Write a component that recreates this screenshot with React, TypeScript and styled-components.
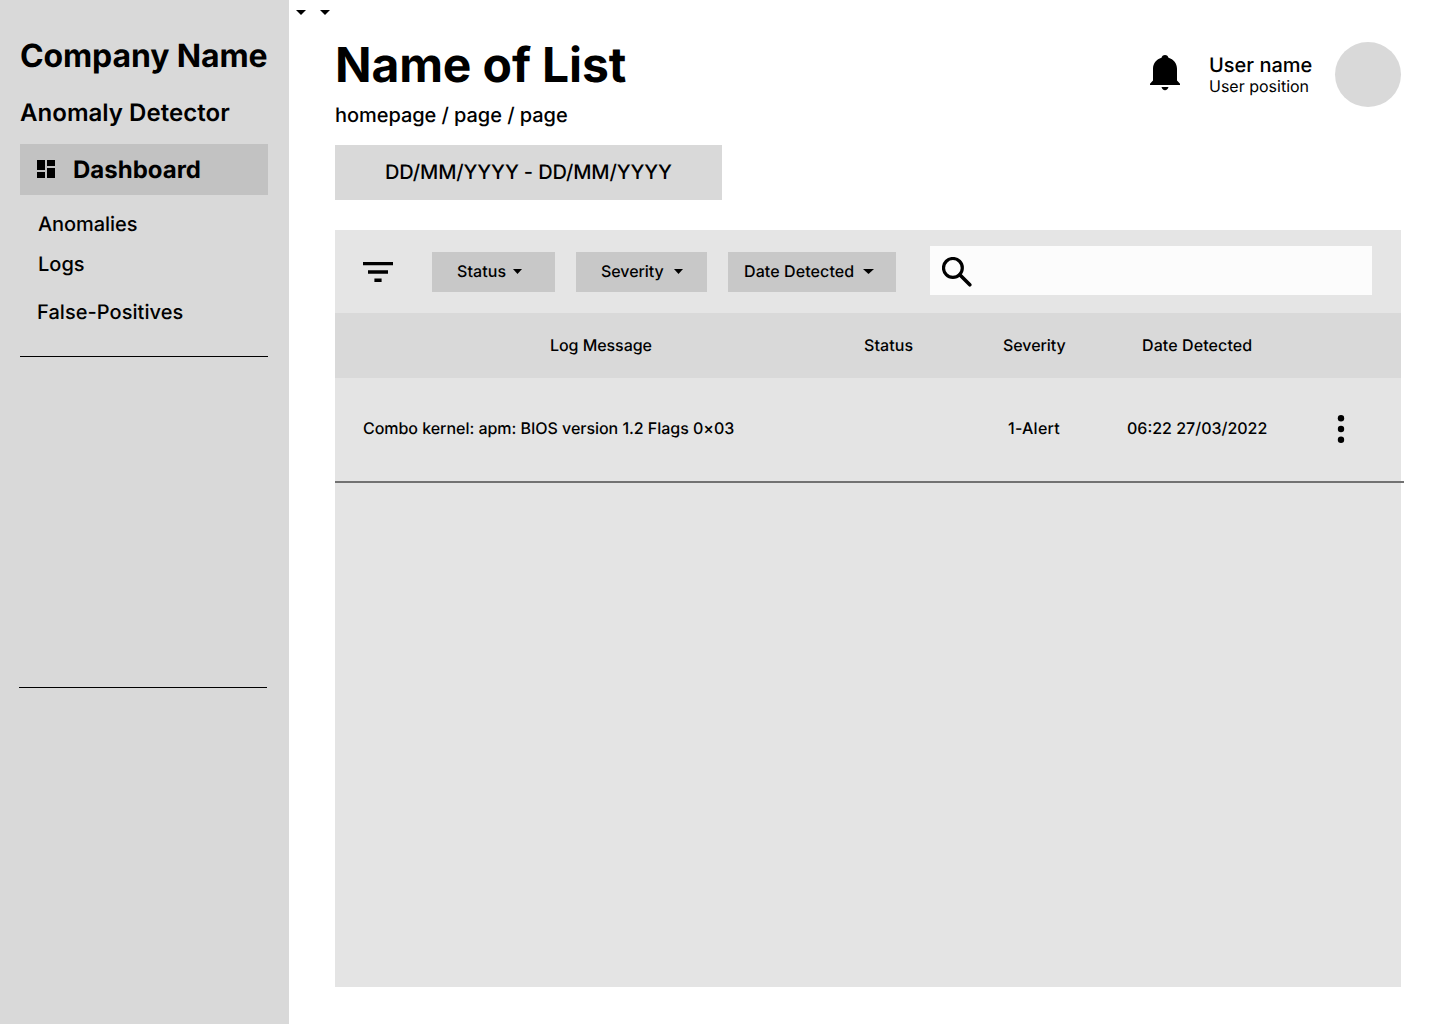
import React from "react";
import styled, { createGlobalStyle } from "styled-components";

const GlobalStyle = createGlobalStyle`
  *, *::before, *::after { box-sizing: border-box; }
  body { margin: 0; background: #fff; color: #000; font-family: Inter, "Liberation Sans", sans-serif; text-rendering: geometricPrecision; }
`;

const Page = styled.div`
  display: flex;
  width: 1440px;
  height: 1024px;
  overflow: hidden;
`;

const Sidebar = styled.aside`
  flex: none;
  width: 289px;
  padding: 36px 21px 0 20px;
  background: #d9d9d9;
`;

const Company = styled.h1`
  margin: 0;
  font-size: 32px;
  line-height: 40px;
  font-weight: 700;
  letter-spacing: -0.13px;
  white-space: nowrap;
`;

const Product = styled.h2`
  margin: 20px 0 0;
  font-size: 24px;
  line-height: 33px;
  font-weight: 600;
  letter-spacing: 0.04px;
  white-space: nowrap;
`;

const ActiveItem = styled.a`
  display: flex;
  align-items: center;
  gap: 15px;
  height: 51px;
  margin-top: 15px;
  padding-left: 14px;
  background: #c2c2c2;
  font-size: 24px;
  font-weight: 700;

  svg { margin-bottom: 1px; }
`;

const SubNav = styled.nav`
  display: flex;
  flex-direction: column;
  height: 161px;
  padding: 14px 0 0 17px;
`;

const SubItem = styled.a<{ $gap?: number; $indent?: number; $track?: number }>`
  margin-top: ${(p) => p.$gap ?? 0}px;
  padding-left: ${(p) => p.$indent ?? 0}px;
  font-size: 20px;
  line-height: 30px;
  font-weight: 500;
  letter-spacing: ${(p) => p.$track ?? 0}px;
`;

const Rule = styled.hr<{ $shift?: number }>`
  width: 248px;
  height: 1px;
  margin: 0 0 330px ${(p) => p.$shift ?? 0}px;
  border: 0;
  background: #000;
`;

const Main = styled.main`
  flex: 1;
  display: flex;
  flex-direction: column;
  min-width: 0;
`;

const TopCarets = styled.div`
  display: flex;
  align-items: center;
  height: 24px;
`;

const CaretSlot = styled.span`
  display: flex;
  justify-content: center;
  width: 24px;
`;

const Content = styled.div`
  width: 1066px;
  margin-left: 46px;
`;

const Header = styled.header`
  display: flex;
  justify-content: space-between;
  height: 121px;
`;

const Title = styled.h2`
  margin: 11px 0 0;
  font-size: 48px;
  line-height: 60px;
  font-weight: 700;
  letter-spacing: -0.13px;
`;

const Breadcrumb = styled.div`
  margin-top: 5px;
  font-size: 20px;
  line-height: 30px;
  font-weight: 500;
  letter-spacing: -0.06px;
`;

const UserArea = styled.div`
  display: flex;
  align-items: flex-start;
  padding-top: 18px;
`;

const BellBox = styled.span`
  display: flex;
  margin: 12px 29px 0 0;
`;

const UserText = styled.div`
  width: 126px;
  padding-top: 11px;
`;

const UserName = styled.div`
  font-size: 20px;
  line-height: 24px;
  font-weight: 500;
`;

const UserPosition = styled.div`
  font-size: 16px;
  line-height: 19px;
`;

const Avatar = styled.div`
  width: 66px;
  height: 65px;
  border-radius: 50%;
  background: #d9d9d9;
`;

const DateRange = styled.div`
  display: flex;
  align-items: center;
  width: 387px;
  height: 55px;
  padding: 0 0 2px 50px;
  background: #d9d9d9;
  font-size: 20px;
  font-weight: 500;
  letter-spacing: -0.14px;
`;

const Panel = styled.section`
  height: 757px;
  margin-top: 30px;
  background: #e4e4e4;
  font-size: 16px;
  font-weight: 500;
`;

const Toolbar = styled.div`
  display: flex;
  align-items: center;
  height: 83px;
  padding-left: 28px;
  background: #e5e5e5;
`;

const Filters = styled.div`
  display: flex;
  gap: 21px;
  margin: 0 34px 0 39px;
`;

const FilterButton = styled.button<{ $width: number; $inset: number; $gap: number; $track?: number }>`
  display: flex;
  align-items: center;
  gap: ${(p) => p.$gap}px;
  width: ${(p) => p.$width}px;
  height: 40px;
  padding: 0 0 2px ${(p) => p.$inset}px;
  border: 0;
  background: #c8c8c8;
  color: #000;
  font: inherit;
  letter-spacing: ${(p) => p.$track ?? 0}px;
  text-rendering: inherit;
  white-space: nowrap;

  svg { margin-top: 2px; }
`;

const Search = styled.div`
  display: flex;
  align-items: center;
  width: 442px;
  height: 49px;
  margin-bottom: 2px;
  padding: 2px 0 0 12px;
  background: #fcfcfc;
`;

const Row = styled.div<{ $head?: boolean }>`
  display: grid;
  grid-template-columns: 504px 100px 188px 150px 124px;
  align-items: center;
  height: ${(p) => (p.$head ? 65 : 103)}px;
  padding-bottom: ${(p) => (p.$head ? 1 : 3)}px;
  background: ${(p) => (p.$head ? "#d9d9d9" : "#e4e4e4")};
`;

const Cell = styled.div<{ $left?: number; $track?: number }>`
  padding-left: ${(p) => p.$left ?? 0}px;
  line-height: 20px;
  letter-spacing: ${(p) => p.$track ?? 0}px;
  white-space: nowrap;
`;

const MenuCell = styled.div`
  display: flex;
  padding: 2px 0 0 60px;
`;

const Divider = styled.div`
  width: 1069px;
  height: 2px;
  background: #727272;
`;

const Caret = ({ w, h }: { w: number; h: number }) => (
  <svg width={w} height={h} viewBox="0 0 10 5" preserveAspectRatio="none">
    <path d="M0 0h10L5 5z" />
  </svg>
);

export default function App() {
  return (
    <>
      <GlobalStyle />
      <Page>
        <Sidebar>
          <Company>Company Name</Company>
          <Product>Anomaly Detector</Product>
          <ActiveItem>
            <svg width="24" height="24" viewBox="0 0 24 24">
              <path d="M3 13h8V3H3v10zm0 8h8v-6H3v6zm10 0h8V11h-8v10zm0-18v6h8V3h-8z" />
            </svg>
            Dashboard
          </ActiveItem>
          <SubNav>
            <SubItem $indent={1} $track={-0.06}>Anomalies</SubItem>
            <SubItem $indent={1} $gap={10}>Logs</SubItem>
            <SubItem $gap={18} $track={0.05}>False-Positives</SubItem>
          </SubNav>
          <Rule />
          <Rule $shift={-1} />
        </Sidebar>
        <Main>
          <TopCarets>
            <CaretSlot><Caret w={10} h={5} /></CaretSlot>
            <CaretSlot><Caret w={10} h={5} /></CaretSlot>
          </TopCarets>
          <Content>
            <Header>
              <div>
                <Title>Name of List</Title>
                <Breadcrumb>homepage / page / page</Breadcrumb>
              </div>
              <UserArea>
                <BellBox>
                  <svg width="30" height="37" viewBox="0 0 30 37">
                    <path d="M15 1c1.900 0 3.200 1.200 3.500 2.700 5 1.400 8.500 5.600 8.500 11V26.500L30 29.800V31H0v-1.200l3-3.300V14.700C3 9.300 6.500 5.100 11.500 3.700c.3-1.500 1.600-2.700 3.500-2.700zM11.500 33h7c-.4 1.900-1.800 3.200-3.500 3.200S11.900 34.900 11.500 33z" />
                  </svg>
                </BellBox>
                <UserText>
                  <UserName>User name</UserName>
                  <UserPosition>User position</UserPosition>
                </UserText>
                <Avatar />
              </UserArea>
            </Header>
            <DateRange>DD/MM/YYYY - DD/MM/YYYY</DateRange>
            <Panel>
              <Toolbar>
                <svg width="30" height="20" viewBox="0 0 30 20">
                  <path d="M0 0h30v3.330H0zM5 8.330h20v3.340H5zM11.400 16.500h7.200V20h-7.200z" />
                </svg>
                <Filters>
                  <FilterButton $width={123} $inset={25} $gap={7} $track={0.12}>Status<Caret w={9} h={5} /></FilterButton>
                  <FilterButton $width={131} $inset={25} $gap={10} $track={-0.05}>Severity<Caret w={9} h={5} /></FilterButton>
                  <FilterButton $width={168} $inset={16} $gap={9} $track={0.1}>Date Detected<Caret w={11} h={5} /></FilterButton>
                </Filters>
                <Search>
                  <svg width="30" height="30" viewBox="0 0 30 30" fill="none" stroke="#000">
                    <circle cx="10.900" cy="10.900" r="9.400" strokeWidth="3.200" />
                    <path d="M17.800 17.800l10 10" strokeWidth="3.600" strokeLinecap="round" />
                  </svg>
                </Search>
              </Toolbar>
              <Row $head>
                <Cell $left={215} $track={-0.06}>Log Message</Cell>
                <Cell $left={25} $track={0.12}>Status</Cell>
                <Cell $left={64} $track={-0.05}>Severity</Cell>
                <Cell $left={15} $track={0.1}>Date Detected</Cell>
                <Cell />
              </Row>
              <Row>
                <Cell $left={28} $track={-0.04}>Combo kernel: apm: BIOS version 1.2 Flags 0×03</Cell>
                <Cell />
                <Cell $left={69} $track={0.25}>1-Alert</Cell>
                <Cell>06:22 27/03/2022</Cell>
                <MenuCell>
                  <svg width="8" height="28" viewBox="0 0 8 28">
                    <circle cx="4" cy="3.300" r="3.200" />
                    <circle cx="4" cy="14" r="3.200" />
                    <circle cx="4" cy="24.700" r="3.200" />
                  </svg>
                </MenuCell>
              </Row>
              <Divider />
            </Panel>
          </Content>
        </Main>
      </Page>
    </>
  );
}
